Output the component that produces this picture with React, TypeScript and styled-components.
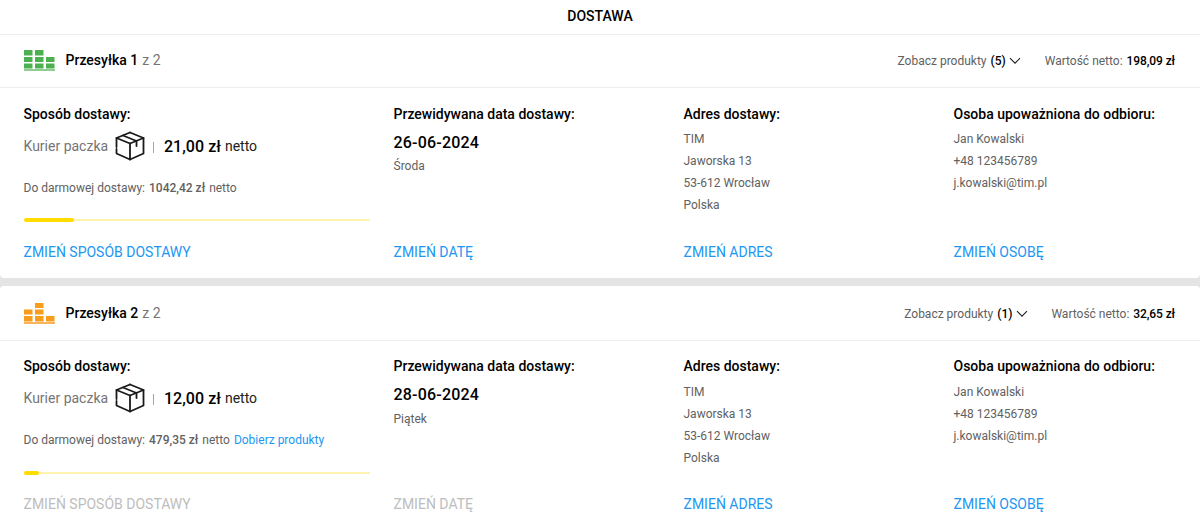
import React from "react";
import styled, { createGlobalStyle } from "styled-components";

const Global = createGlobalStyle`
  html, body { margin: 0; padding: 0; background: #fff; }
  body { font-family: Roboto, "Liberation Sans", sans-serif; color: #000; }
  * { box-sizing: border-box; }
`;

const Page = styled.div`
  width: 1200px;
  height: 531px;
  overflow: hidden;
  background: #e4e4e4;
`;

const Title = styled.div`
  height: 35px;
  background: #fff;
  border-bottom: 1px solid #eeeeee;
  display: flex;
  align-items: center;
  justify-content: center;
  font-size: 14px;
  font-weight: 500;
  color: #000;
  padding-bottom: 3px;
`;

const Card = styled.section<{ $last?: boolean }>`
  background: #fff;
  border-radius: ${(p) => (p.$last ? "4px 4px 0 0" : "0 0 4px 4px")};
  margin-bottom: ${(p) => (p.$last ? 0 : "8px")};
  height: ${(p) => (p.$last ? "245px" : "243px")};
  padding-top: ${(p) => (p.$last ? "2px" : 0)};
`;

const CardHeader = styled.header`
  height: 53px;
  border-bottom: 1px solid #eeeeee;
  padding: 0 25px 0 24px;
  display: flex;
  align-items: center;
`;

const Name = styled.div`
  margin-left: 10.5px;
  margin-bottom: 2px;
  font-size: 14px;
  font-weight: 500;
  color: #000;
`;

const Of = styled.span`
  font-weight: 400;
  color: #757575;
  margin-left: 0.6px;
`;

const Right = styled.div`
  margin-left: auto;
  display: flex;
  align-items: center;
  font-size: 12px;
  color: #616161;
`;

const Strong = styled.b`
  font-weight: 500;
  color: #000;
  margin-left: 4px;
`;

const Total = styled(Strong)`
  letter-spacing: -0.1px;
`;

const Chevron = styled.svg`
  margin-left: 3.5px;
  margin-right: 23.5px;
  display: block;
`;

const Grid = styled.div<{ $last?: boolean }>`
  display: grid;
  grid-template-columns: 370px 290px 270px 1fr;
  padding: ${(p) => (p.$last ? "17.3px" : "18px")} 0 0 23.5px;
`;

const Column = styled.div`
  display: flex;
  flex-direction: column;
  align-items: flex-start;
  height: 154px;
`;

const FirstColumn = styled(Column)`
  width: 346.5px;
`;

const Heading = styled.div`
  font-size: 14px;
  line-height: 17px;
  font-weight: 500;
  color: #000;
`;

const Method = styled.div`
  display: flex;
  align-items: center;
  height: 30px;
  margin-top: 8px;
  font-size: 14px;
  color: #757575;
`;

const BoxIcon = styled.svg`
  margin-left: 6.5px;
  display: block;
`;

const Divider = styled.span`
  width: 1px;
  height: 11px;
  background: #9aa7b0;
  margin: 2px 10.3px 0 8px;
`;

const Price = styled.span`
  font-size: 16px;
  font-weight: 500;
  letter-spacing: 0.05px;
  color: #000;
`;

const Net = styled.span`
  font-size: 14px;
  color: #212121;
  margin-left: 4px;
`;

const Free = styled.div`
  margin-top: 20px;
  font-size: 12px;
  line-height: 14px;
  color: #616161;
  display: flex;
  align-items: center;
`;

const FreeAmount = styled.b`
  font-weight: 500;
  margin-left: 4px;
`;

const FreeNet = styled.span`
  margin-left: 4px;
`;

const Suggest = styled.a`
  margin-left: 4px;
  color: #2196f3;
`;

const Track = styled.div`
  width: 100%;
  height: 2px;
  margin-top: 24.4px;
  background: #fff3b0;
  position: relative;
`;

const Fill = styled.div`
  position: absolute;
  left: 0;
  top: -1px;
  height: 4px;
  border-radius: 2px;
  background: #ffdd00;
`;

const DateValue = styled.div`
  margin-top: 10px;
  font-size: 16px;
  line-height: 19px;
  font-weight: 500;
  letter-spacing: 0.2px;
  color: #000;
`;

const Weekday = styled.div`
  margin-top: 7.4px;
  font-size: 12px;
  line-height: 14px;
  color: #616161;
`;

const Lines = styled.div`
  margin-top: 5.4px;
  font-size: 12px;
  line-height: 22px;
  color: #616161;
`;

const Action = styled.a<{ $disabled?: boolean }>`
  margin-top: auto;
  font-size: 14px;
  line-height: 16px;
  color: ${(p) => (p.$disabled ? "#bdbdbd" : "#2196f3")};
`;

const Blocks = ({ color, line, rows }: { color: string; line: string; rows: [number, number, number, number][] }) => (
  <svg width="31" height="22" viewBox="0 0 31 22" style={{ display: "block", flex: "none" }}>
    {rows.map(([x, y, w, h], i) => (
      <rect key={i} x={x} y={y} width={w} height={h} fill={color} />
    ))}
    <rect x="0" y="19" width="31" height="2" fill={line} />
  </svg>
);

const greenRows: [number, number, number, number][] = [
  [0, 0, 8.5, 5.5], [11, 0, 8.5, 5.5],
  [0, 7, 8.5, 5], [11, 7, 8.5, 5], [22, 7, 8.5, 5],
  [0, 13.5, 8.5, 5], [11, 13.5, 8.5, 5], [22, 13.5, 8.5, 5],
];

const orangeRows: [number, number, number, number][] = [
  [11, 0, 8.5, 5],
  [0, 6.5, 8.5, 5], [11, 6.5, 8.5, 5],
  [0, 13, 8.5, 5.5], [11, 13, 8.5, 5.5], [22, 13, 8.5, 5.5],
];

const Box = () => (
  <BoxIcon width="30" height="30" viewBox="0 0 30 30" fill="none" stroke="#1a1a1a" strokeWidth="1.8" strokeLinejoin="round" strokeLinecap="round">
    <path d="M15 1.5 L28.5 7 V22.5 L15 28.5 L1.5 22.5 V18" />
    <path d="M1.5 14 V7 L15 1.5" />
    <path d="M1.5 7 L15 12.5 L28.5 7" />
    <path d="M15 12.5 V28.5" />
    <path d="M8 4.5 L21.5 10 V15" />
    <path d="M1.5 15 V16" />
  </BoxIcon>
);

type Shipment = {
  no: number;
  rows: [number, number, number, number][];
  color: string;
  line: string;
  products: number;
  net: string;
  price: string;
  free: string;
  pct: number;
  suggest?: boolean;
  date: string;
  day: string;
  locked?: boolean;
};

const data: Shipment[] = [
  { no: 1, rows: greenRows, color: "#4caf50", line: "#8fce92", products: 5, net: "198,09 zł", price: "21,00 zł", free: "1042,42 zł", pct: 50, date: "26-06-2024", day: "Środa" },
  { no: 2, rows: orangeRows, color: "#f89c1c", line: "#f9b45a", products: 1, net: "32,65 zł", price: "12,00 zł", free: "479,35 zł", pct: 15, suggest: true, date: "28-06-2024", day: "Piątek", locked: true },
];

export default function App() {
  return (
    <Page>
      <Global />
      <Title>DOSTAWA</Title>
      {data.map((s, i) => (
        <Card key={s.no} $last={i === 1}>
          <CardHeader>
            <Blocks color={s.color} line={s.line} rows={s.rows} />
            <Name>
              Przesyłka {s.no} <Of>z 2</Of>
            </Name>
            <Right>
              Zobacz produkty <Strong>({s.products})</Strong>
              <Chevron width="12" height="8" viewBox="0 0 12 8" fill="none" stroke="#212121" strokeWidth="1.1">
                <path d="M1 1.2 L6 6.2 L11 1.2" />
              </Chevron>
              Wartość netto: <Total>{s.net}</Total>
            </Right>
          </CardHeader>
          <Grid $last={i === 1}>
            <FirstColumn>
              <Heading>Sposób dostawy:</Heading>
              <Method>
                Kurier paczka
                <Box />
                <Divider />
                <Price>{s.price}</Price>
                <Net>netto</Net>
              </Method>
              <Free>
                Do darmowej dostawy: <FreeAmount>{s.free}</FreeAmount> <FreeNet>netto</FreeNet>
                {s.suggest && <Suggest>Dobierz produkty</Suggest>}
              </Free>
              <Track>
                <Fill style={{ width: s.pct }} />
              </Track>
              <Action $disabled={s.locked}>ZMIEŃ SPOSÓB DOSTAWY</Action>
            </FirstColumn>
            <Column>
              <Heading>Przewidywana data dostawy:</Heading>
              <DateValue>{s.date}</DateValue>
              <Weekday>{s.day}</Weekday>
              <Action $disabled={s.locked}>ZMIEŃ DATĘ</Action>
            </Column>
            <Column>
              <Heading>Adres dostawy:</Heading>
              <Lines>
                TIM<br />Jaworska 13<br />53-612 Wrocław<br />Polska
              </Lines>
              <Action>ZMIEŃ ADRES</Action>
            </Column>
            <Column>
              <Heading>Osoba upoważniona do odbioru:</Heading>
              <Lines>
                Jan Kowalski<br />+48 123456789<br />j.kowalski@tim.pl
              </Lines>
              <Action>ZMIEŃ OSOBĘ</Action>
            </Column>
          </Grid>
        </Card>
      ))}
    </Page>
  );
}
